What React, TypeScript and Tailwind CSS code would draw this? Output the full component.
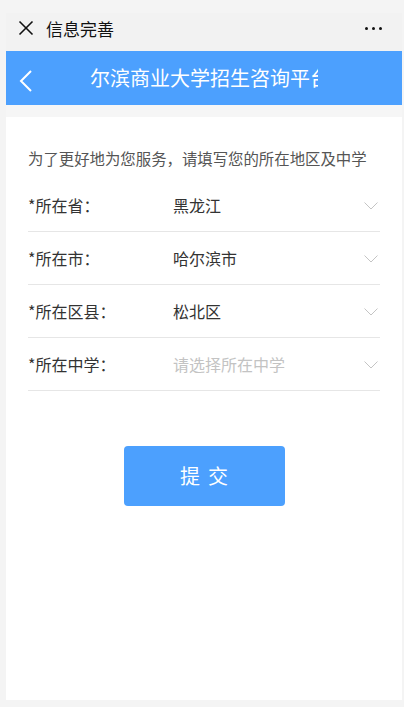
import React from "react";

const font = { fontFamily: '"Noto Sans CJK SC", "Noto Sans", sans-serif' };

function Chevron() {
  return (
    <svg width="14" height="8" viewBox="0 0 14 8" className="shrink-0">
      <polyline points="0.5,0.5 7,7 13.5,0.5" fill="none" stroke="#c4c4c4" strokeWidth="1" />
    </svg>
  );
}

function Row({ label, value, placeholder }: { label: string; value: string; placeholder?: boolean }) {
  return (
    <div className="flex items-center h-[53px] border-b border-[#e6e6e6]">
      <div className="w-[145px] shrink-0 text-[16px] text-[#333]">{label}</div>
      <div className={`flex-1 text-[16px] ${placeholder ? "text-[#c3c3c3]" : "text-[#333]"}`}>{value}</div>
      <div className="pr-[2px] pt-[2px]">
        <Chevron />
      </div>
    </div>
  );
}

export default function App() {
  return (
    <div className="w-full h-[707px] bg-[#f4f4f4] pt-[13px] pl-[6px] pr-[2px] pb-[7px] flex flex-col" style={font}>
      <div className="h-[38px] pb-[8px] bg-[#f2f2f2] flex items-center shrink-0">
        <svg width="16" height="16" viewBox="0 0 16 16" className="ml-[12px]">
          <line x1="1.5" y1="1.5" x2="14.5" y2="14.5" stroke="#111" strokeWidth="1.6" />
          <line x1="14.5" y1="1.5" x2="1.5" y2="14.5" stroke="#111" strokeWidth="1.6" />
        </svg>
        <div className="ml-[12px] text-[17px] text-[#111] leading-none">信息完善</div>
        <div className="ml-auto mr-[20px] flex gap-[4px] items-center">
          <span className="w-[3px] h-[3px] rounded-full bg-[#111]" />
          <span className="w-[3px] h-[3px] rounded-full bg-[#111]" />
          <span className="w-[3px] h-[3px] rounded-full bg-[#111]" />
        </div>
      </div>
      <div className="h-[54px] bg-[#4ca0fe] flex items-center shrink-0">
        <svg width="14" height="24" viewBox="0 0 14 24" className="ml-[13px] mt-[6px]">
          <polyline points="12,2 2,12 12,22" fill="none" stroke="#fff" strokeWidth="2" />
        </svg>
        <div className="ml-[57px] w-[228px] overflow-hidden whitespace-nowrap text-[20px] text-white leading-none">
          尔滨商业大学招生咨询平台
        </div>
      </div>
      <div className="h-[12px] bg-[#f6f6f6] shrink-0" />
      <div className="flex-1 bg-white pl-[22px] pr-[22px] pt-[30px]">
        <div className="text-[15.4px] leading-[22px] text-[#555] whitespace-nowrap">为了更好地为您服务，请填写您的所在地区及中学</div>
        <div className="mt-[10px]">
          <Row label="*所在省：" value="黑龙江" />
          <Row label="*所在市：" value="哈尔滨市" />
          <Row label="*所在区县：" value="松北区" />
          <Row label="*所在中学：" value="请选择所在中学" placeholder />
        </div>
        <div className="flex justify-center mt-[55px]">
          <button className="w-[161px] h-[60px] rounded-[4px] bg-[#4ca0fe] text-white text-[20px] tracking-[8px] pl-[8px]">
            提交
          </button>
        </div>
      </div>
    </div>
  );
}
